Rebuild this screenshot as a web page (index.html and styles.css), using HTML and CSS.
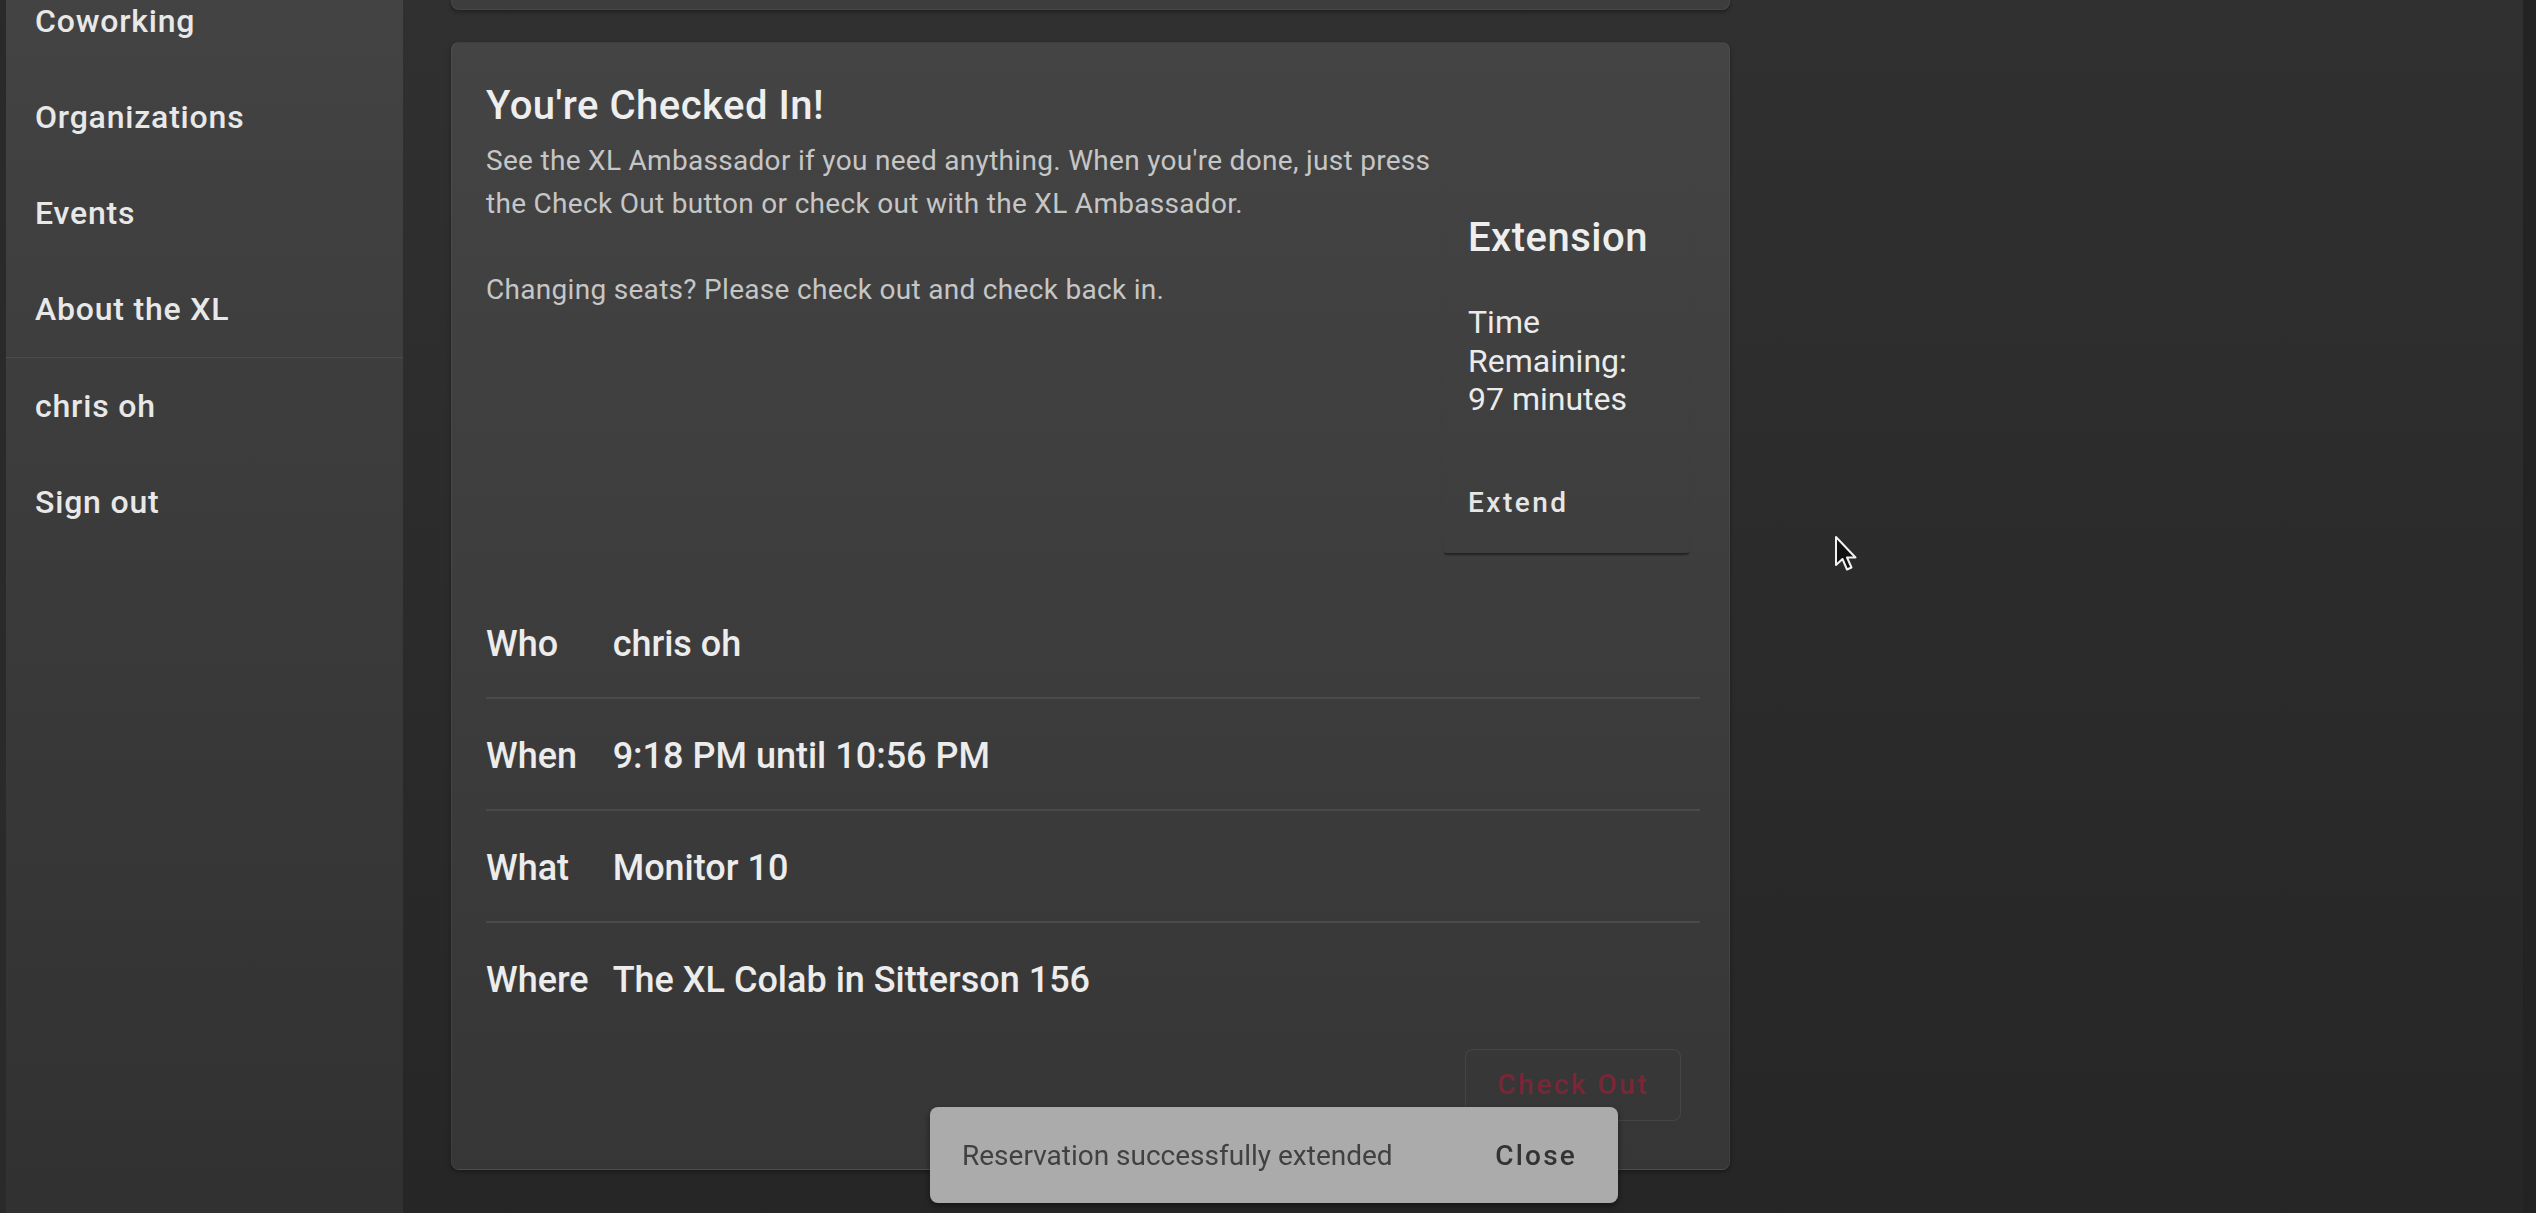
FILE: index.html
```html
<!DOCTYPE html>
<html lang="en">
<head>
<meta charset="utf-8">
<title>XL Coworking - Checked In</title>
<link rel="stylesheet" href="styles.css">
</head>
<body>
<div class="app">
  <div class="edge"></div>
  <nav class="sidenav">
    <ul class="nav-list nav-main">
      <li class="nav-item">Coworking</li>
      <li class="nav-item">Organizations</li>
      <li class="nav-item">Events</li>
      <li class="nav-item">About the XL</li>
    </ul>
    <ul class="nav-list">
      <li class="nav-item">chris oh</li>
      <li class="nav-item">Sign out</li>
    </ul>
  </nav>
  <main class="content">
    <div class="column">
      <div class="card card-prev"></div>
      <section class="card checkin">
        <div class="checkin-top">
          <div class="intro">
            <h2 class="title">You're Checked In!</h2>
            <p>See the XL Ambassador if you need anything. When you're done, just press the Check Out button or check out with the XL Ambassador.</p>
            <p>Changing seats? Please check out and check back in.</p>
          </div>
          <div class="extension">
            <h3 class="title">Extension</h3>
            <p class="remaining">Time Remaining: 97 minutes</p>
            <button class="text-btn extend">Extend</button>
          </div>
        </div>
        <dl class="details">
          <dt>Who</dt><dd>chris oh</dd>
          <dt>When</dt><dd>9:18 PM until 10:56 PM</dd>
          <dt>What</dt><dd>Monitor 10</dd>
          <dt class="last">Where</dt><dd class="last">The XL Colab in Sitterson 156</dd>
        </dl>
        <div class="actions">
          <button class="checkout">Check Out</button>
        </div>
      </section>
    </div>
  </main>
  <div class="right-edge"></div>
</div>

<div class="snackbar">
  <span class="snack-msg">Reservation successfully extended</span>
  <button class="text-btn snack-close">Close</button>
</div>

<svg class="cursor" width="26" height="38" viewBox="0 0 26 38" aria-hidden="true">
  <path d="M2 2 L2 30 L8.5 24 L13 34.5 L17.5 32.5 L13 22.5 L21.5 22.5 Z" fill="#111" stroke="#f2f2f2" stroke-width="2" stroke-linejoin="round"/>
</svg>
</body>
</html>
```

FILE: styles.css
```css
* {
  box-sizing: border-box;
}

html,
body {
  margin: 0;
  height: 100%;
}

body {
  font-family: Roboto, "Liberation Sans", sans-serif;
  background: linear-gradient(#303030, #262626);
  color: #ececec;
  overflow: hidden;
}

.app {
  display: flex;
  height: 1213px;
}

.edge {
  flex: none;
  width: 6px;
  background: #2a2a2a;
}

.right-edge {
  flex: none;
  width: 13px;
  background: #232323;
}

/* Sidebar */
.sidenav {
  flex: none;
  width: 397px;
  background: linear-gradient(#434343, #313131);
  overflow: hidden;
}

.nav-list {
  list-style: none;
  margin: 0;
  padding: 0;
}

.nav-main {
  margin-top: -27px;
  border-bottom: 1px solid #4d4d4d;
}

.nav-item {
  height: 96px;
  line-height: 96px;
  padding-left: 29px;
  font-size: 32px;
  font-weight: 500;
  letter-spacing: 0.8px;
  color: #e8e8e8;
  white-space: nowrap;
}

/* Content */
.content {
  flex: 1;
  min-width: 0;
  padding-left: 48px;
}

.column {
  width: 1279px;
}

.card {
  border: 1px solid rgba(255, 255, 255, 0.05);
  border-radius: 8px;
  box-shadow: 0 2px 4px rgba(0, 0, 0, 0.35);
}

.card-prev {
  height: 10px;
  border-top: 0;
  border-radius: 0 0 8px 8px;
  background: #3d3d3d;
}

.checkin {
  margin-top: 32px;
  padding: 39px 29px 48px 34px;
  background: linear-gradient(#444444, #363636);
}

.checkin-top {
  display: flex;
  align-items: flex-start;
}

.intro {
  flex: 1;
  min-width: 0;
}

.title {
  margin: 0;
  font-size: 40px;
  line-height: 48px;
  font-weight: 500;
  letter-spacing: 0.5px;
  color: #eeeeee;
}

.intro .title {
  margin-bottom: 9px;
}

.intro p {
  margin: 0;
  font-size: 28px;
  line-height: 43px;
  letter-spacing: 0.3px;
  color: #c6c6c6;
}

.intro p + p {
  margin-top: 43px;
}

.extension {
  flex: none;
  width: 247px;
  margin: 100px 10px 0 0;
  padding: 32px 30px 14px 25px;
  border-radius: 4px;
  box-shadow: 0 3px 2px -1px rgba(0, 0, 0, 0.45);
}

.remaining {
  margin: 41px 0 0;
  font-size: 32px;
  line-height: 38.5px;
  color: #ebebeb;
}

.text-btn {
  background: none;
  border: 0;
  padding: 0 16px;
  font-family: Roboto, "Liberation Sans", sans-serif;
  font-weight: 500;
  font-size: 28px;
}

.extend {
  display: block;
  height: 72px;
  margin: 48px 0 0 -16px;
  line-height: 72px;
  letter-spacing: 2.5px;
  color: #e6e6e6;
}

/* Details */
.details {
  display: grid;
  grid-template-columns: max-content 1fr;
  margin: 34px 0 0;
}

.details dt,
.details dd {
  margin: 0;
  padding: 36px 0 32px;
  border-bottom: 2px solid #4a4a4a;
  font-size: 36px;
  line-height: 42px;
  font-weight: 500;
  color: #ececec;
  white-space: nowrap;
}

.details dt {
  padding-right: 24px;
}

.details .last {
  border-bottom: 0;
}

.actions {
  display: flex;
  justify-content: flex-end;
  padding: 16px 19px 0 0;
}

.checkout {
  height: 72px;
  padding: 0 31px;
  border: 1px solid rgba(255, 255, 255, 0.07);
  border-radius: 8px;
  background: transparent;
  font-family: Roboto, "Liberation Sans", sans-serif;
  font-size: 28px;
  font-weight: 500;
  line-height: 70px;
  letter-spacing: 2.5px;
  color: #7a2636;
}

/* Snackbar overlay */
.snackbar {
  position: fixed;
  left: 930px;
  bottom: 10px;
  width: 688px;
  height: 96px;
  display: flex;
  align-items: center;
  justify-content: space-between;
  padding: 0 25px 0 32px;
  background: #ababab;
  border-radius: 8px;
  box-shadow: 0 3px 6px rgba(0, 0, 0, 0.45);
}

.snack-msg {
  font-size: 28px;
  color: #414141;
}

.snack-close {
  height: 72px;
  letter-spacing: 2.2px;
  color: #333333;
}

.cursor {
  position: fixed;
  left: 1834px;
  top: 535px;
}
```
